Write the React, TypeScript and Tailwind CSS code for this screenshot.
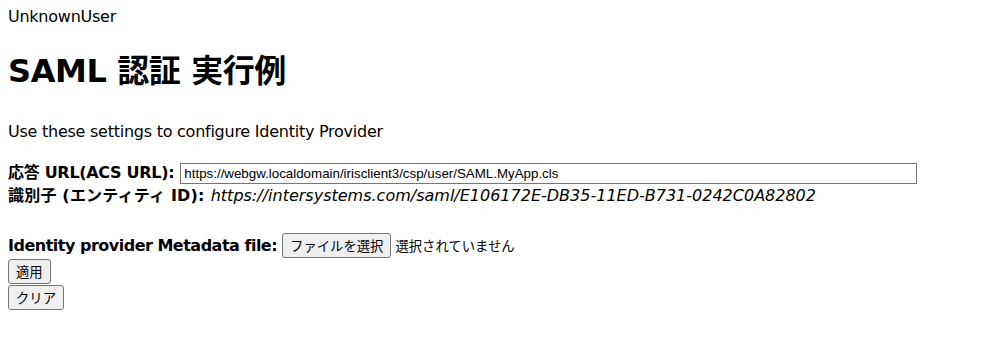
export default function App() {
  const font = "font-['DejaVu_Sans','Noto_Sans_CJK_JP',sans-serif]";
  const btn =
    "h-[25px] rounded-[3px] border border-[#767676] bg-[#efefef] px-[7px] text-[13.33px] leading-[23px] text-black font-['Noto_Sans_CJK_JP',sans-serif]";

  return (
    <div className={`min-h-[338px] bg-white px-2 pt-2 text-[16px] text-black ${font}`}>
      <div className="leading-[18px] tracking-[-0.25px]">UnknownUser</div>

      <h1 className="mt-[25px] text-[32px] font-bold leading-[40px] tracking-[-0.4px]">SAML 認証 実行例</h1>

      <p className="mt-[32px] leading-[18px] tracking-[-0.25px]">
        Use these settings to configure Identity Provider
      </p>

      <div className="mt-[22px] flex h-[21px] items-center">
        <span className="pb-[2px] font-bold leading-[18px] tracking-[-0.3px]">応答 URL(ACS URL):</span>
        <input
          readOnly
          value="https://webgw.localdomain/irisclient3/csp/user/SAML.MyApp.cls"
          className="ml-[6px] h-[21px] w-[737px] border border-[#767676] px-[3px] text-[13.33px] text-black outline-none font-['Liberation_Sans',sans-serif]"
        />
      </div>

      <div className="flex leading-[24px]">
        <span className="font-bold tracking-[0.2px]">識別子 (エンティティ ID):</span>
        <span className="ml-[6px] italic">
          https://intersystems.com/saml/E106172E-DB35-11ED-B731-0242C0A82802
        </span>
      </div>

      <div className="mt-[25px] flex h-[25px] items-center">
        <span className="font-bold leading-[18px] tracking-[-0.5px]">Identity provider Metadata file:</span>
        <button className={`ml-[5px] ${btn}`}>ファイルを選択</button>
        <span className="ml-[4px] text-[13.33px] font-['Noto_Sans_CJK_JP',sans-serif]">選択されていません</span>
      </div>

      <div className="mt-px">
        <button className={btn}>適用</button>
      </div>
      <div className="mt-px">
        <button className={btn}>クリア</button>
      </div>
    </div>
  );
}
